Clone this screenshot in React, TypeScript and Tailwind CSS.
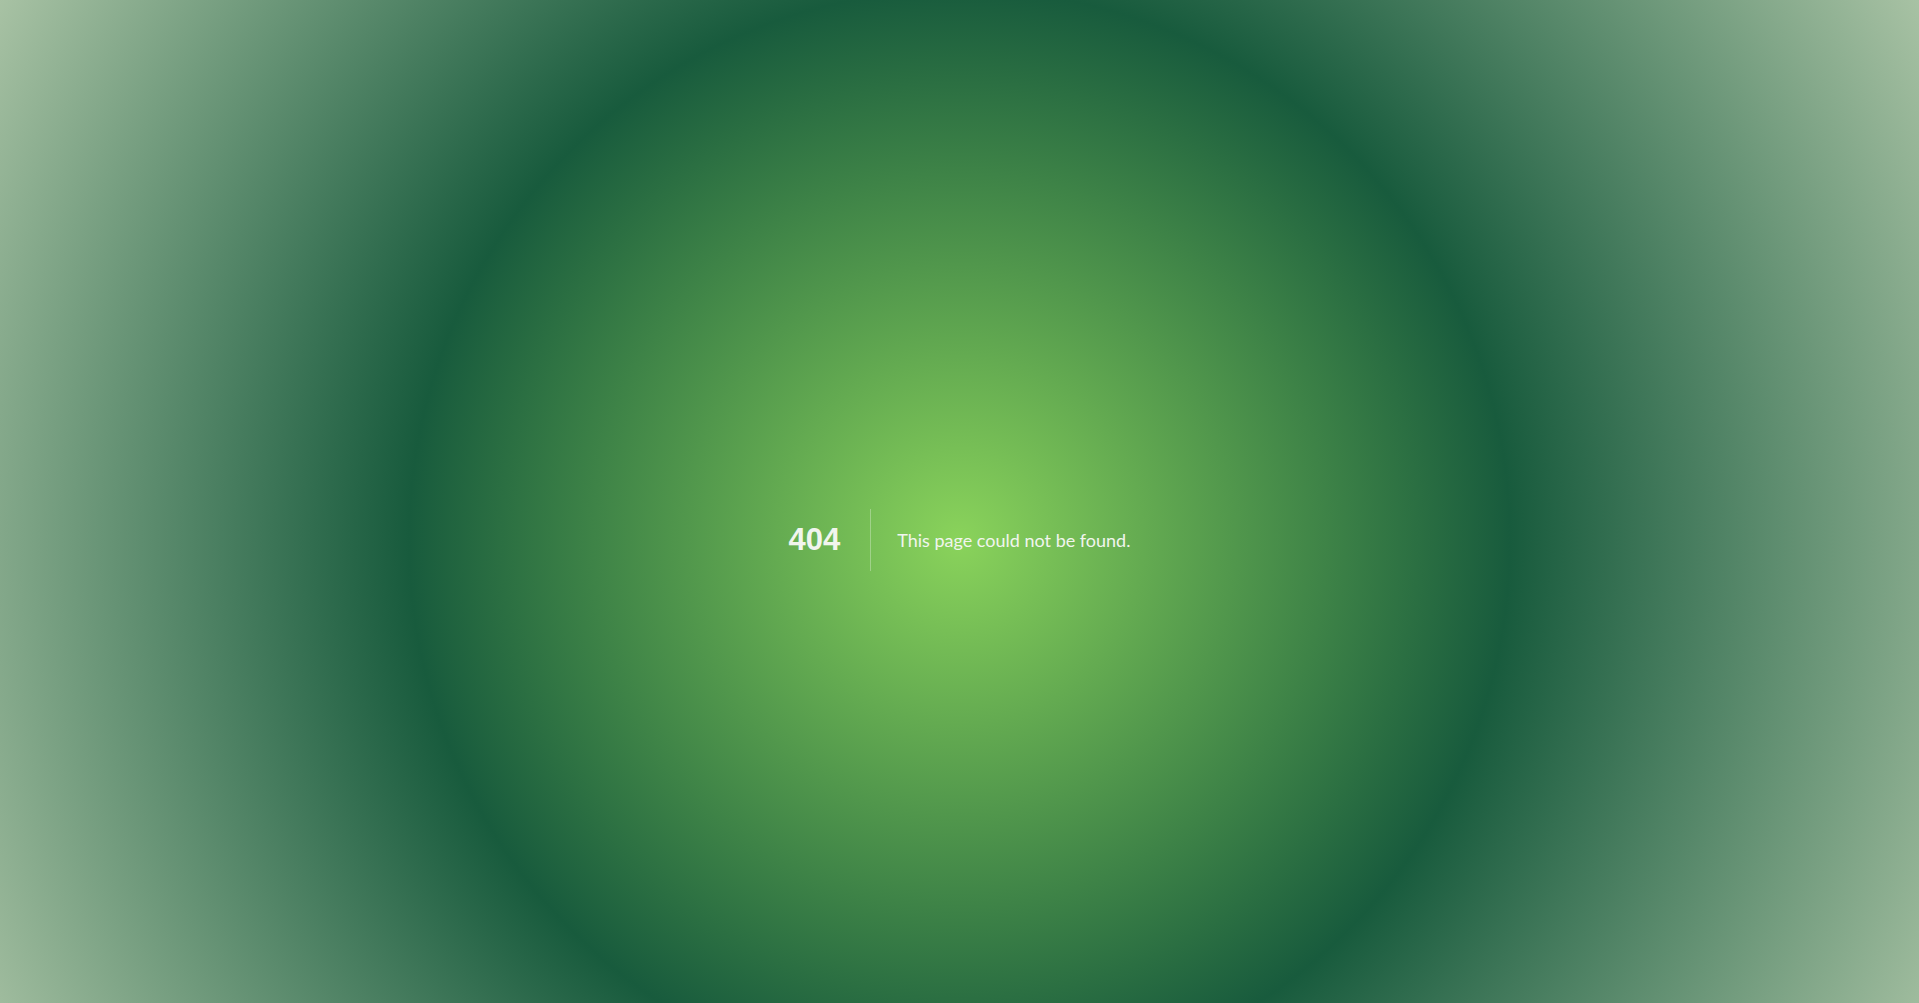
export default function App() {
  return (
    <div className="h-[1080px] w-full bg-[radial-gradient(circle,#8ad35b_0%,#185b3d_50%,#a8c2a4_100%)] flex items-center justify-center font-['Lato',sans-serif] text-[#f1f5ee]">
      <div className="flex items-center">
        <h1 className="text-[31px] font-bold leading-[62px] pr-[30px] mr-[26px] border-r border-white/30 font-['Liberation_Sans',Arial,sans-serif]">
          404
        </h1>
        <h2 className="text-[18px] font-normal leading-[62px]">This page could not be found.</h2>
      </div>
    </div>
  );
}
